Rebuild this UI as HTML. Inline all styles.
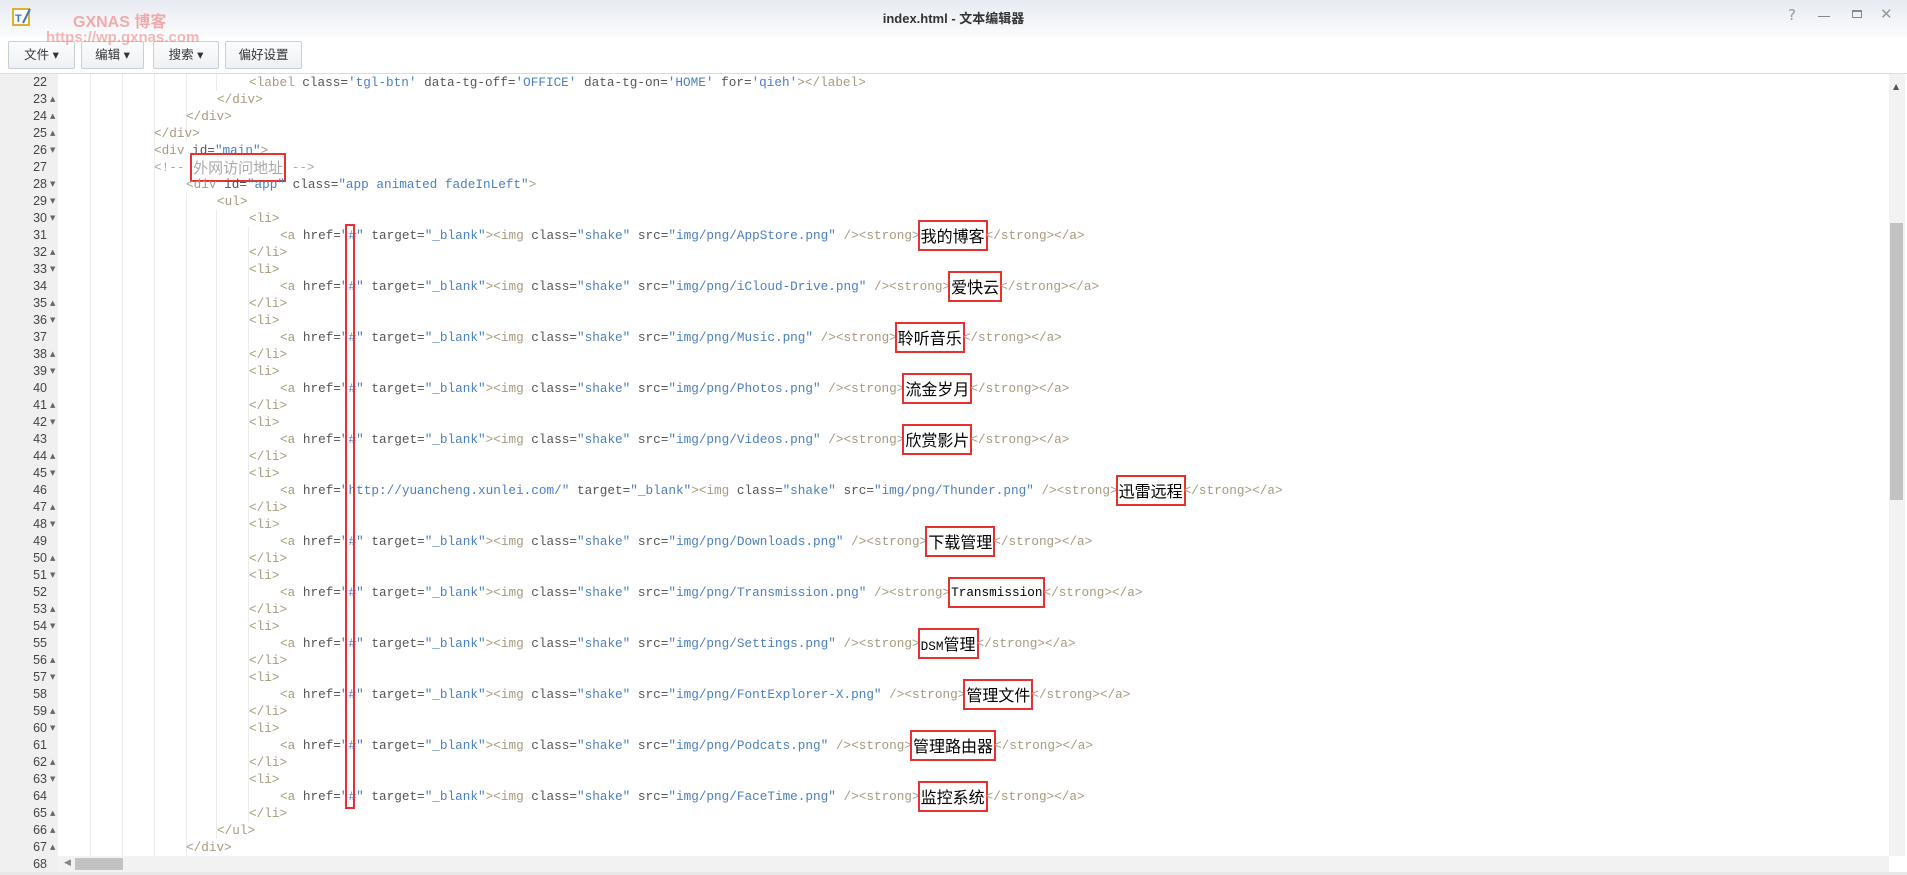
<!DOCTYPE html>
<html><head><meta charset="utf-8"><style>
*{margin:0;padding:0;box-sizing:border-box}
body{width:1907px;height:875px;overflow:hidden;background:#fff;font-family:"Liberation Sans","Noto Sans CJK SC",sans-serif;position:relative}
#title{position:absolute;left:0;top:0;width:1907px;height:37px;background:linear-gradient(#e6ebf1,#fbfcfd)}
#tb{position:absolute;left:0;top:37px;width:1907px;height:37px;background:#fff}
.btn{position:absolute;top:41px;height:28px;border:1px solid #c9cfd6;border-radius:2px;background:linear-gradient(#fbfcfd,#eef1f4);font-size:12.5px;color:#333;line-height:26px;text-align:center;font-family:"Liberation Sans","Noto Sans CJK SC",sans-serif}
#gut{position:absolute;left:0;top:74px;width:58px;height:801px;background:#f0f0f0}
#edtop{position:absolute;left:0;top:73px;width:1907px;height:1px;background:#dcdcdc}
.ln{position:absolute;left:0;width:47px;text-align:right;font:12.5px/17px "Liberation Sans",sans-serif;color:#444}
.fm{position:absolute;left:50px;font:7px/17px "DejaVu Sans",sans-serif;color:#666}
.c{position:absolute;white-space:pre;font:12.7px/17px "Liberation Mono",monospace;color:#555;height:17px;overflow:visible}
.t{color:#a69a80}.v{color:#4b7fc0}.a{color:#555}.cm{color:#aaa}
.z{display:inline-block;vertical-align:top;height:27px;line-height:27px;margin:-5px 0;padding:0 1px;font-family:"Noto Sans CJK SC",sans-serif;font-size:16px;color:#000;outline:2px solid #e8302f;outline-offset:0;background:#fff}
.zg{display:inline-block;vertical-align:top;height:25px;line-height:25px;margin:-4px 0;padding:0 1px;font:15px/25px "Noto Sans CJK SC",sans-serif;color:#aaa;outline:2px solid #e8302f}
.g{position:absolute;width:1px;background:#ececec}
</style></head><body>
<div id="title">
<svg style="position:absolute;left:11px;top:6px" width="22" height="22" viewBox="0 0 22 22"><rect x="2" y="3" width="16" height="16" fill="#fff" stroke="#e0b030" stroke-width="2"/><text x="4" y="16" font-size="11" font-family="Liberation Sans" font-weight="bold" fill="#3a78c0">T</text><path d="M12 17 L19 3" stroke="#3a78c0" stroke-width="2"/></svg>
<div style="position:absolute;left:73px;top:8px;font:bold 16px 'Liberation Sans','Noto Sans CJK SC',sans-serif;color:rgba(240,120,120,.6)">GXNAS 博客</div>
<div style="position:absolute;width:100%;top:8px;text-align:center;font:bold 13px 'Liberation Sans','Noto Sans CJK SC',sans-serif;color:#333">index.html - 文本编辑器</div>
<div style="position:absolute;left:1788px;top:6px;font:15px 'DejaVu Sans',sans-serif;color:#999">?</div>
<div style="position:absolute;left:1818px;top:16px;width:12px;height:1px;background:#888"></div>
<div style="position:absolute;left:1852px;top:10px;width:10px;height:8px;border:1px solid #888;border-top-width:2px"></div>
<div style="position:absolute;left:1880px;top:5px;font:15px 'DejaVu Sans',sans-serif;color:#999">✕</div>
</div>
<div id="tb"></div>
<div class="btn" style="left:8px;width:67px">文件 ▾</div>
<div class="btn" style="left:81px;width:63px">编辑 ▾</div>
<div class="btn" style="left:153px;width:66px">搜索 ▾</div>
<div class="btn" style="left:225px;width:77px">偏好设置</div>
<div style="position:absolute;left:46px;top:29px;font:bold 15px 'Liberation Sans',sans-serif;color:rgba(240,120,120,.55)">https://wp.gxnas.com</div>
<div id="edtop"></div>
<div id="gut"></div>
<div class="g" style="left:90px;top:74px;height:782px"></div>
<div class="g" style="left:122px;top:74px;height:782px"></div>
<div class="g" style="left:154px;top:74px;height:782px"></div>
<div class="g" style="left:186px;top:74px;height:68px"></div>
<div class="g" style="left:186px;top:193px;height:663px"></div>
<div class="g" style="left:216px;top:74px;height:17px"></div>
<div class="g" style="left:216px;top:210px;height:629px"></div>
<div class="g" style="left:248px;top:227px;height:595px"></div>
<div style="position:absolute;left:1889px;top:74px;width:16px;height:782px;background:#f2f2f2"></div>
<div style="position:absolute;left:1893px;top:82px;font:8px 'DejaVu Sans';color:#555">▲</div>
<div style="position:absolute;left:1890px;top:223px;width:13px;height:277px;background:#c2c2c2"></div>
<div style="position:absolute;left:58px;top:856px;width:1831px;height:16px;background:#f2f2f2"></div>
<div style="position:absolute;left:64px;top:858px;font:9px 'DejaVu Sans';color:#888">◀</div>
<div style="position:absolute;left:75px;top:858px;width:48px;height:12px;background:#c2c2c2"></div>
<div style="position:absolute;left:0;top:872px;width:1907px;height:3px;background:#e8e8e8"></div>

<div id="lines"></div>
<div style="position:absolute;left:345px;top:224px;width:10px;height:585px;border:2px solid #e8302f"></div>

<script>
var L=[
[22,6,'',`<span class="t">&lt;label</span> class=<span class="v">'tgl-btn'</span> data-tg-off=<span class="v">'OFFICE'</span> data-tg-on=<span class="v">'HOME'</span> for=<span class="v">'qieh'</span><span class="t">&gt;&lt;/label&gt;</span>`],
[23,5,'u','<span class="t">&lt;/div&gt;</span>'],
[24,4,'u','<span class="t">&lt;/div&gt;</span>'],
[25,3,'u','<span class="t">&lt;/div&gt;</span>'],
[26,3,'d','<span class="t">&lt;div</span> id=<span class="v">"main"</span><span class="t">&gt;</span>'],
[27,3,'','<span class="cm">&lt;!-- </span><span class="zg">外网访问地址</span><span class="cm"> --&gt;</span>'],
[28,4,'d','<span class="t">&lt;div</span> id=<span class="v">"app"</span> class=<span class="v">"app animated fadeInLeft"</span><span class="t">&gt;</span>'],
[29,5,'d','<span class="t">&lt;ul&gt;</span>']
];
var items=[
['#','AppStore','我的博客'],['#','iCloud-Drive','爱快云'],['#','Music','聆听音乐'],['#','Photos','流金岁月'],['#','Videos','欣赏影片'],
['http://yuancheng.xunlei.com/','Thunder','迅雷远程'],['#','Downloads','下载管理'],['#','Transmission','Transmission'],['#','Settings','DSM管理'],
['#','FontExplorer-X','管理文件'],['#','Podcats','管理路由器'],['#','FaceTime','监控系统']];
var n=30;
items.forEach(function(it){
 L.push([n,6,'d','<span class="t">&lt;li&gt;</span>']);
 var z=it[2]=='Transmission'?'<span class="z" style="font-family:Liberation Mono,monospace;font-size:12.7px">Transmission</span>':(it[2]=='DSM管理'?'<span class="z"><span style="font-family:Liberation Mono,monospace;font-size:12.7px">DSM</span>管理</span>':'<span class="z">'+it[2]+'</span>');
 L.push([n+1,7,'','<span class="t">&lt;a</span> href=<span class="v">"'+it[0]+'"</span> target=<span class="v">"_blank"</span><span class="t">&gt;&lt;img</span> class=<span class="v">"shake"</span> src=<span class="v">"img/png/'+it[1]+'.png"</span> <span class="t">/&gt;&lt;strong&gt;</span>'+z+'<span class="t">&lt;/strong&gt;&lt;/a&gt;</span>']);
 L.push([n+2,6,'u','<span class="t">&lt;/li&gt;</span>']);
 n+=3;
});
L.push([66,5,'u','<span class="t">&lt;/ul&gt;</span>']);
L.push([67,4,'u','<span class="t">&lt;/div&gt;</span>']);
L.push([68,0,'','']);
var h='';
L.forEach(function(l){
 var top=74+(l[0]-22)*17;
 h+='<div class="ln" style="top:'+top+'px">'+l[0]+'</div>';
 if(l[2])h+='<div class="fm" style="top:'+top+'px">'+(l[2]=='u'?'▲':'▼')+'</div>';
 var lv=[58,0,0,154,186,217,249,280][l[1]]||58;
 h+='<div class="c" style="top:'+top+'px;left:'+lv+'px">'+l[3]+'</div>';
});
document.getElementById('lines').innerHTML=h;
</script>
</body></html>
